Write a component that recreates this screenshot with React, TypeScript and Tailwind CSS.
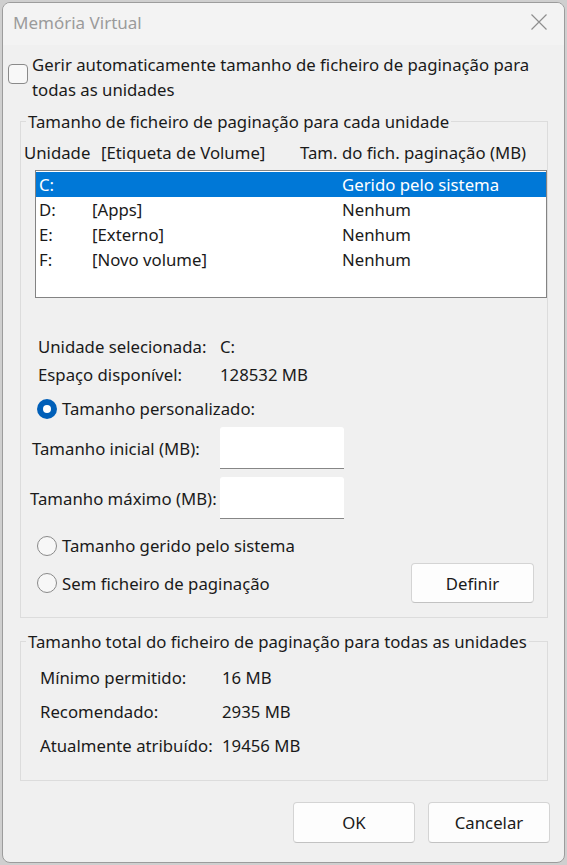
const font = "font-['Noto_Sans',sans-serif]";

function Radio({ checked }: { checked?: boolean }) {
  if (checked) {
    return (
      <span className="flex h-[20px] w-[20px] shrink-0 items-center justify-center rounded-full bg-[#005fb8]">
        <span className="h-[8px] w-[8px] rounded-full bg-white" />
      </span>
    );
  }
  return <span className="h-[20px] w-[20px] shrink-0 rounded-full border border-[#8a8a8a] bg-[#f7f7f7]" />;
}

function Button({ label, className = '' }: { label: string; className?: string }) {
  return (
    <button
      className={`flex items-center justify-center rounded-[4px] border border-[#d4d4d4] border-b-[#c2c2c2] bg-[#fdfdfd] text-[#1a1a1a] ${className}`}
    >
      {label}
    </button>
  );
}

function SizeField({ label, pad }: { label: string; pad: string }) {
  return (
    <div className={`flex h-[42px] items-center ${pad}`}>
      <span className="flex-1">{label}</span>
      <div className="h-[42px] w-[124px] rounded-t-[3px] border-b border-[#868686] bg-white" />
    </div>
  );
}

export default function App() {
  const drives = [
    { letter: 'C:', label: '', size: 'Gerido pelo sistema', selected: true },
    { letter: 'D:', label: '[Apps]', size: 'Nenhum' },
    { letter: 'E:', label: '[Externo]', size: 'Nenhum' },
    { letter: 'F:', label: '[Novo volume]', size: 'Nenhum' },
  ];

  const totals = [
    ['Mínimo permitido:', '16 MB'],
    ['Recomendado:', '2935 MB'],
    ['Atualmente atribuído:', '19456 MB'],
  ];

  return (
    <div className={`h-[865px] w-[567px] bg-[#cfcfcf] p-[2px] ${font} text-[16.75px] leading-[25px] text-[#1a1a1a]`}>
      <div className="flex h-full flex-col overflow-hidden rounded-[8px] border border-[#9c9c9c] bg-[#f0f0f0]">
        {/* title bar */}
        <div className="flex h-[42px] shrink-0 items-center justify-between bg-[#f3f3f3] pb-[4px] pl-[10px] pr-[16px]">
          <span className="text-[17px] text-[#9b9b9b]">Memória Virtual</span>
          <svg width="18" height="18" viewBox="0 0 18 18" className="text-[#8e8e8e]">
            <path d="M1.5 1.5 16.5 16.5M16.5 1.5 1.5 16.5" stroke="currentColor" strokeWidth="1.2" fill="none" />
          </svg>
        </div>

        <div className="flex flex-1 flex-col">
          {/* auto manage */}
          <div className="ml-[5px] mt-[7px] flex items-start gap-[4px]">
            <span className="mt-[12px] h-[20px] w-[20px] shrink-0 rounded-[4px] border border-[#8a8a8a] bg-[#f8f8f8]" />
            <span>
              Gerir automaticamente tamanho de ficheiro de paginação para
              <br />
              todas as unidades
            </span>
          </div>

          {/* per-drive group */}
          <fieldset className="ml-[17px] mt-[7px] w-[528px] border border-[#dcdcdc] pb-[14px]">
            <legend className="ml-[5px] px-[2px]">Tamanho de ficheiro de paginação para cada unidade</legend>

            <div className="mt-[6px] flex pl-[3px]">
              <span className="w-[77px]">Unidade</span>
              <span className="w-[199px]">[Etiqueta de Volume]</span>
              <span>Tam. do fich. paginação (MB)</span>
            </div>

            <div className="ml-[14px] mt-[5px] h-[128px] w-[512px] border border-[#838383] bg-white pt-[1px]">
              {drives.map((d) => (
                <div
                  key={d.letter}
                  className={`flex h-[25px] items-center pl-[3px] ${d.selected ? 'bg-[#0078d7] text-white' : ''}`}
                >
                  <span className="w-[53px]">{d.letter}</span>
                  <span className="w-[250px]">{d.label}</span>
                  <span>{d.size}</span>
                </div>
              ))}
            </div>

            <div className="mt-[36px] flex flex-col gap-[3px] pl-[17px]">
              <div className="flex">
                <span className="w-[182px]">Unidade selecionada:</span>
                <span>C:</span>
              </div>
              <div className="flex">
                <span className="w-[182px]">Espaço disponível:</span>
                <span>128532 MB</span>
              </div>
            </div>

            <div className="ml-[16px] mt-[9px] flex items-center gap-[5px]">
              <Radio checked />
              <span>Tamanho personalizado:</span>
            </div>

            <div className="mt-[6px] flex w-[323px] flex-col gap-[8px]">
              <SizeField label="Tamanho inicial (MB):" pad="pl-[11px]" />
              <SizeField label="Tamanho máximo (MB):" pad="pl-[9px]" />
            </div>

            <div className="ml-[16px] mt-[14px] flex items-center gap-[5px]">
              <Radio />
              <span>Tamanho gerido pelo sistema</span>
            </div>

            <div className="ml-[16px] mr-[13px] mt-[5px] flex items-center gap-[5px]">
              <Radio />
              <span className="flex-1">Sem ficheiro de paginação</span>
              <Button label="Definir" className="h-[40px] w-[123px]" />
            </div>
          </fieldset>

          {/* totals group */}
          <fieldset className="ml-[17px] mt-[11px] w-[528px] border border-[#dcdcdc] pb-[22px]">
            <legend className="ml-[5px] px-[2px]">Tamanho total do ficheiro de paginação para todas as unidades</legend>
            <div className="mt-[11px] flex flex-col gap-[9px] pl-[19px]">
              {totals.map(([k, v]) => (
                <div key={k} className="flex">
                  <span className="w-[182px]">{k}</span>
                  <span>{v}</span>
                </div>
              ))}
            </div>
          </fieldset>

          <div className="mr-[14px] mt-[21px] flex justify-end gap-[13px]">
            <Button label="OK" className="h-[41px] w-[122px]" />
            <Button label="Cancelar" className="h-[41px] w-[122px]" />
          </div>
        </div>
      </div>
    </div>
  );
}
